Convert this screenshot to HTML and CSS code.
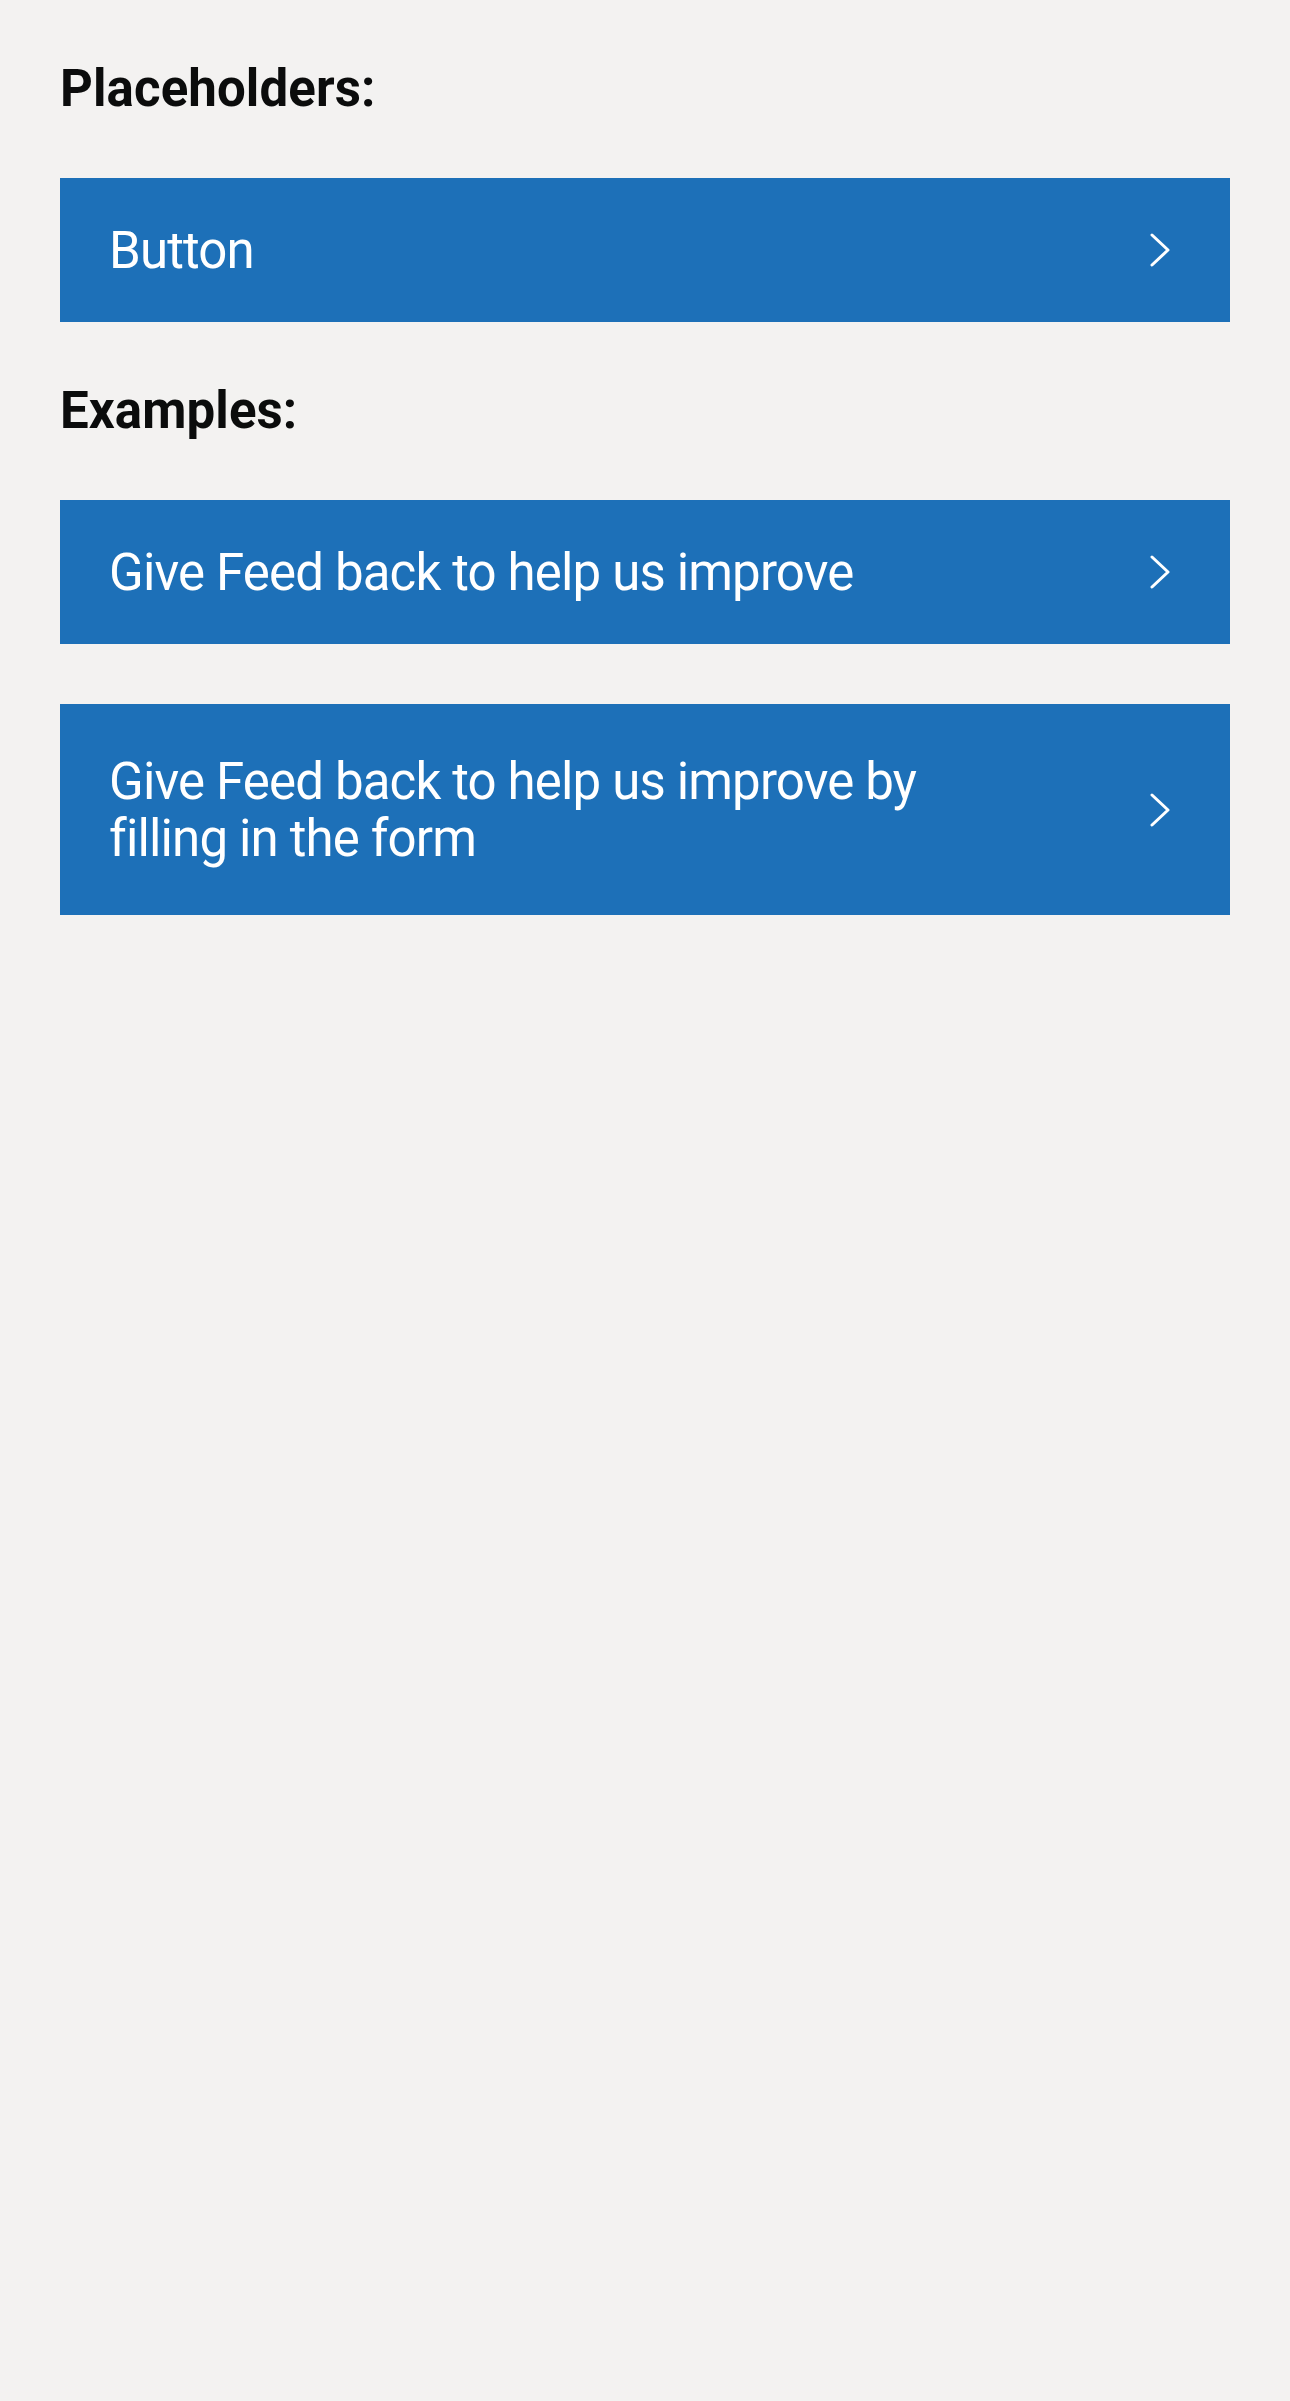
FILE: index.html
```html
<!DOCTYPE html>
<html lang="en">
<head>
<meta charset="utf-8">
<title>Buttons</title>
<link rel="stylesheet" href="styles.css">
</head>
<body>
<main class="page">
  <h2 class="section-title">Placeholders:</h2>
  <a class="nav-button" href="#">
    <span class="nav-button__label">Button</span>
    <svg class="nav-button__chevron" viewBox="0 0 20 34" aria-hidden="true"><polyline points="2,2 18,17 2,32"/></svg>
  </a>

  <h2 class="section-title section-title--spaced">Examples:</h2>
  <a class="nav-button" href="#">
    <span class="nav-button__label">Give Feed back to help us improve</span>
    <svg class="nav-button__chevron" viewBox="0 0 20 34" aria-hidden="true"><polyline points="2,2 18,17 2,32"/></svg>
  </a>
  <a class="nav-button nav-button--multiline nav-button--stacked" href="#">
    <span class="nav-button__label">Give Feed back to help us improve by filling in the form</span>
    <svg class="nav-button__chevron" viewBox="0 0 20 34" aria-hidden="true"><polyline points="2,2 18,17 2,32"/></svg>
  </a>
</main>
</body>
</html>
```

FILE: styles.css
```css
html, body {
  margin: 0;
  padding: 0;
  background: #f3f2f1;
}

body {
  font-family: Roboto, "Noto Sans", "Liberation Sans", sans-serif;
  color: #0b0c0c;
  min-height: 2401px;
}

.page {
  padding: 58px 60px 0;
}

.section-title {
  margin: 0 0 59px;
  font-size: 51px;
  line-height: 61px;
  font-weight: 700;
  letter-spacing: 0.1px;
  color: #0b0c0c;
}

.section-title--spaced {
  margin-top: 58px;
}

.nav-button {
  display: flex;
  align-items: center;
  box-sizing: border-box;
  width: 100%;
  padding: 43.5px 60px 43.5px 49px;
  background: #1d70b8;
  color: #ffffff;
  text-decoration: none;
}

.nav-button--multiline {
  padding-top: 48.5px;
  padding-bottom: 48.5px;
}

.nav-button--stacked {
  margin-top: 60px;
}

.nav-button__label {
  flex: 0 1 auto;
  max-width: 880px;
  font-size: 51px;
  line-height: 57px;
  font-weight: 400;
  letter-spacing: -0.85px;
}

.nav-button__chevron {
  flex: none;
  width: 20px;
  height: 34px;
  margin-left: auto;
  fill: none;
  stroke: #ffffff;
  stroke-width: 3;
  stroke-linecap: round;
  stroke-linejoin: round;
}
```
